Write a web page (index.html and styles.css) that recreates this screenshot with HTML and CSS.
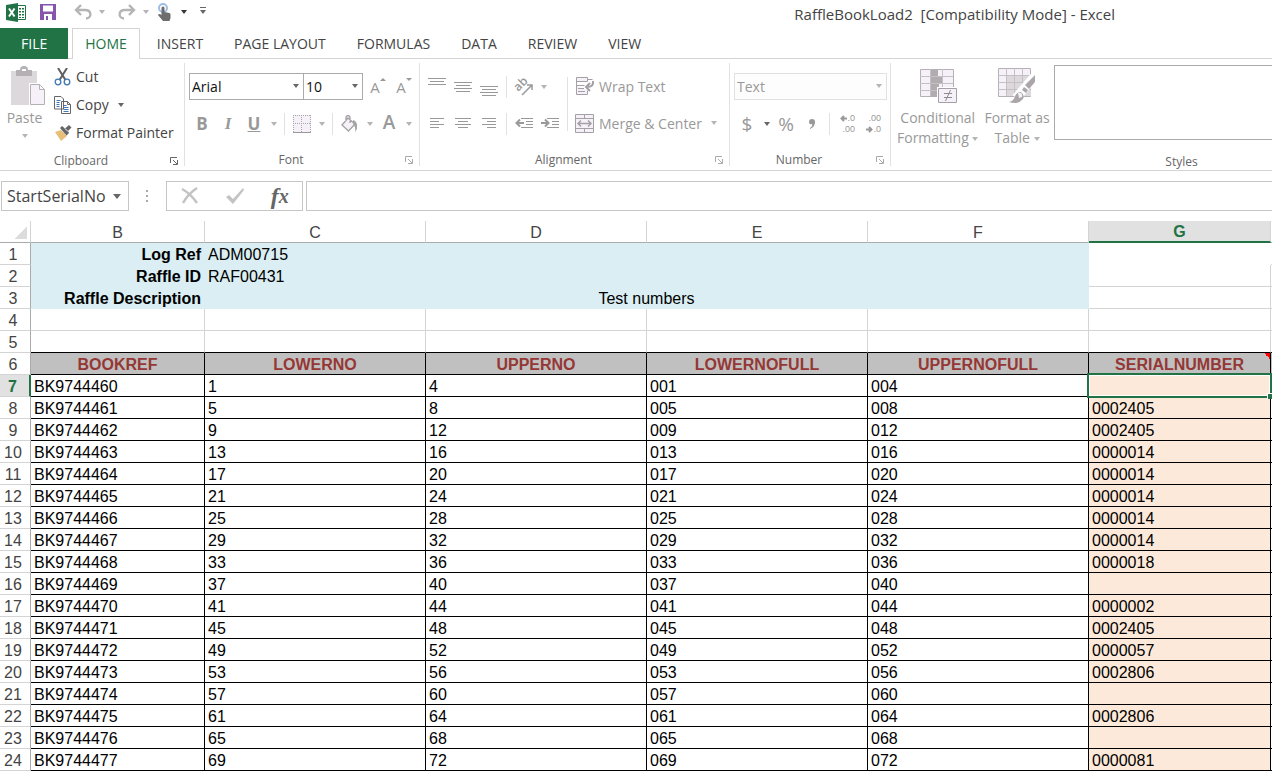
FILE: index.html
```html
<!DOCTYPE html>
<html lang="en">
<head>
    <meta charset="UTF-8">
    <meta name="viewport" content="width=device-width, initial-scale=1.0">
    <title>RaffleBookLoad2 [Compatibility Mode] - Excel</title>
    <link rel="stylesheet" href="styles.css">
</head>
<body>
    <header class="titlebar">
        <div class="quick">
            <svg class="logo" width="20" height="19" viewBox="0 0 20 19">
                <path fill="#fff" stroke="#217346" d="M10 2.500h9.500v14H10z"/>
                <path fill="#217346" d="M0 2l12-2v19L0 17zM13 5h2v1.500h-2zM16 5h2v1.500h-2zM13 8h2v1.500h-2zM16 8h2v1.500h-2zM13 11h2v1.500h-2zM16 11h2v1.500h-2zM13 14h2v1h-2zM16 14h2v1h-2z"/>
                <path stroke="#fff" stroke-width="2" d="M3 5.500l5.500 8M8.500 5.500l-5.500 8"/>
            </svg>
            <button class="quick-btn save" aria-label="Save">
                <svg width="16" height="16" viewBox="0 0 16 16"><path fill="#8656ad" fill-rule="evenodd" d="M0 0h16v16H0zM3 1.500v6h10v-6zM4 10v6h2v-4h2v4h4v-6z"/></svg>
            </button>
            <button class="quick-btn" aria-label="Undo">
                <svg width="18" height="16" viewBox="0 0 18 16" fill="none" stroke="#b5b5b5" stroke-width="2.400"><path d="M7 1L2 6l5 5M2 6h9c7 0 7 8 1 8.500"/></svg>
            </button>
            <button class="caret-btn wide" aria-label="Undo list"><span class="caret light"></span></button>
            <button class="quick-btn" aria-label="Redo">
                <svg width="18" height="16" viewBox="0 0 18 16" fill="none" stroke="#b5b5b5" stroke-width="2.400"><path d="M11 1l5 5-5 5M16 6H7C0 6 0 14 6 14.500"/></svg>
            </button>
            <button class="caret-btn" aria-label="Redo list"><span class="caret light"></span></button>
            <button class="quick-btn" aria-label="Touch mode">
                <svg width="16" height="18" viewBox="0 0 16 18"><circle cx="6" cy="5" r="4" fill="none" stroke="#9dbfe3" stroke-width="2"/><path fill="#6d6d6d" d="M4.500 4.500q1.500-2 3 0V9l5 1 1 1v4l-1 3H6l-5-6q1-2 3.500 0z"/></svg>
            </button>
            <button class="caret-btn" aria-label="Touch list"><span class="caret dark"></span></button>
            <button class="quick-btn" aria-label="Customize toolbar"><span class="caret lined"></span></button>
        </div>
        <div class="title">RaffleBookLoad2&nbsp; [Compatibility Mode] - Excel</div>
    </header>

    <nav class="tabs">
        <a class="tab file" href="#file">FILE</a>
        <a class="tab active" href="#home">HOME</a>
        <a class="tab" href="#insert">INSERT</a>
        <a class="tab" href="#layout">PAGE LAYOUT</a>
        <a class="tab" href="#formulas">FORMULAS</a>
        <a class="tab" href="#data">DATA</a>
        <a class="tab" href="#review">REVIEW</a>
        <a class="tab" href="#view">VIEW</a>
    </nav>

    <div class="ribbon">
        <section class="group clipboard">
            <div class="group-body">
                <button class="big paste">
                    <svg width="40" height="40" viewBox="-5 0 40 40">
                        <path fill="#dcd8dc" d="M1 5h26v34H1z"/>
                        <path fill="#b4b0b4" d="M6 4h4q0-4 4-4t4 4h4v6H6z"/><path fill="#fff" d="M12 3h4v2h-4z"/>
                        <path fill="#f6f1f8" stroke="#fff" stroke-width="3" d="M20.500 18.500h9l5 5v15h-14z"/>
                        <path fill="#f6f1f8" stroke="#b4b0b4" d="M20.500 18.500h9l5 5v15h-14zM29.500 18.500v5h5"/>
                    </svg>
                    <span>Paste</span>
                    <span class="caret light"></span>
                </button>
                <div class="stack">
                    <button class="cmd">
                        <svg width="18" height="18" viewBox="0 0 18 18" fill="none"><path stroke="#606060" stroke-width="2" d="M4 0l7.500 12M13 0L5.500 12"/><circle cx="4" cy="14" r="2.800" stroke="#3f78b5" stroke-width="1.300"/><circle cx="13" cy="14" r="2.800" stroke="#3f78b5" stroke-width="1.300"/></svg>
                        Cut
                    </button>
                    <button class="cmd">
                        <svg width="18" height="18" viewBox="0 0 18 18" fill="#fff" stroke="#666"><path d="M.5.500H7L9.500 3v10H.500zM7.500 5.500h6l3 3v9h-9zM13.500 5.500v3h3"/><path stroke="#3f78b5" d="M2.500 4.500h4M2.500 6.500h3M2.500 8.500h3M2.500 10.500h3M9.500 9.500h3M9.500 11.500h5M9.500 13.500h5M9.500 15.500h5"/></svg>
                        Copy <span class="caret"></span>
                    </button>
                    <button class="cmd">
                        <svg width="18" height="18" viewBox="0 0 18 18"><path fill="#e8bf79" d="M1 8l6-2 6 6-6 5z"/><path fill="#666" d="M6 4l2-2 3 2.500L15 1l2.500 2.500L14 7l1 2-2.500 2.500z"/><path stroke="#fff" d="M11 4.500l3 3"/></svg>
                        Format Painter
                    </button>
                </div>
            </div>
            <footer class="group-name">Clipboard<button class="launch dark" aria-label="Clipboard options"><svg width="8" height="8" viewBox="0 0 8 8" fill="none" stroke="currentColor"><path d="M.5 6V.500H7M3 3l4 4M7.500 3v4.500H3"/></svg></button></footer>
        </section>

        <section class="group font">
            <div class="group-body rows">
                <div class="row">
                    <span class="select family"><select aria-label="Font"><option>Arial</option></select></span>
                    <span class="select size"><select aria-label="Font size"><option>10</option></select></span>
                    <button class="tool grow" aria-label="Increase font size">A<svg width="6" height="4" viewBox="0 0 6 4"><path fill="currentColor" d="M0 3l3-3 3 3z"/></svg></button>
                    <button class="tool grow" aria-label="Decrease font size">A<svg width="6" height="4" viewBox="0 0 6 4"><path fill="currentColor" d="M0 0h6L3 3z"/></svg></button>
                </div>
                <div class="row">
                    <button class="tool bold">B</button>
                    <button class="tool italic">I</button>
                    <button class="tool underline">U</button>
                    <button class="caret-btn" aria-label="Underline style"><span class="caret light"></span></button>
                    <span class="sep"></span>
                    <button class="tool" aria-label="Borders"><svg width="18" height="18" viewBox="0 0 18 18"><path fill="#f6f1f8" d="M0 0h18v18H0z"/><path fill="none" stroke="#aaa5aa" stroke-dasharray="1 1" d="M0 .5h18M.5 0v17M17.500 0v17M8.500 0v17M0 8.500h18"/><path stroke="#999" d="M0 17.500h18"/></svg></button>
                    <button class="caret-btn" aria-label="Border list"><span class="caret light"></span></button>
                    <span class="sep"></span>
                    <button class="tool" aria-label="Fill color"><svg width="18" height="18" viewBox="0 0 18 18"><path fill="#f6f1f8" stroke="#a5a0a5" stroke-width="1.300" d="M7 3l7 6-6.500 7L1 10zM5 6V2q2-3 4 0v6"/><path fill="#a5a5a5" d="M12 5q5 1 4 9l-2 3q1-5-2-8z"/></svg></button>
                    <button class="caret-btn" aria-label="Fill list"><span class="caret light"></span></button>
                    <button class="tool color">A</button>
                    <button class="caret-btn" aria-label="Font color list"><span class="caret light"></span></button>
                </div>
            </div>
            <footer class="group-name">Font<button class="launch" aria-label="Font options"><svg width="8" height="8" viewBox="0 0 8 8" fill="none" stroke="currentColor"><path d="M.5 6V.500H7M3 3l4 4M7.500 3v4.500H3"/></svg></button></footer>
        </section>

        <section class="group alignment">
            <div class="group-body">
                <div class="rows">
                    <div class="row">
                        <button class="tool" aria-label="Top align"><svg width="18" height="18" viewBox="0 0 18 18" stroke="currentColor"><path d="M0 .5h18M2 3.500h14M0 6.500h18"/></svg></button>
                        <button class="tool" aria-label="Middle align"><svg width="18" height="18" viewBox="0 0 18 18" stroke="currentColor"><path d="M0 4.500h18M2 7.500h14M0 10.500h18M2 13.500h14"/></svg></button>
                        <button class="tool" aria-label="Bottom align"><svg width="18" height="18" viewBox="0 0 18 18" stroke="currentColor"><path d="M0 8.500h18M2 11.500h14M0 14.500h18M2 17.500h14"/></svg></button>
                        <span class="sep"></span>
                        <button class="tool" aria-label="Orientation"><svg width="20" height="18" viewBox="0 0 20 18"><text class="slant" x="1" y="12" transform="rotate(-45 5 9)">ab</text><path fill="none" stroke="currentColor" stroke-width="1.500" d="M8 17L18 7M13 7h5v5"/></svg></button>
                        <button class="caret-btn" aria-label="Orientation list"><span class="caret light"></span></button>
                    </div>
                    <div class="row">
                        <button class="tool" aria-label="Align left"><svg width="16" height="12" viewBox="0 0 16 12" stroke="currentColor"><path d="M1 .5h14M1 3.500h9M1 6.500h14M1 9.500h9"/></svg></button>
                        <button class="tool" aria-label="Center"><svg width="16" height="12" viewBox="0 0 16 12" stroke="currentColor"><path d="M0 .5h16M3 3.500h10M0 6.500h16M3 9.500h10"/></svg></button>
                        <button class="tool" aria-label="Align right"><svg width="16" height="12" viewBox="0 0 16 12" stroke="currentColor"><path d="M1 .5h14M6 3.500h9M1 6.500h14M6 9.500h9"/></svg></button>
                        <span class="sep"></span>
                        <button class="tool" aria-label="Decrease indent"><svg width="18" height="12" viewBox="0 0 18 12" fill="none" stroke="currentColor"><path d="M6 .5h12M11 3.500h7M11 6.500h7M6 9.500h12"/><path stroke-width="2" d="M9 5H1M5 1.500L1.500 5 5 8.500"/></svg></button>
                        <button class="tool" aria-label="Increase indent"><svg width="18" height="12" viewBox="0 0 18 12" fill="none" stroke="currentColor"><path d="M6 .5h12M11 3.500h7M11 6.500h7M6 9.500h12"/><path stroke-width="2" d="M0 5h8M4 1.500L7.500 5 4 8.500"/></svg></button>
                    </div>
                </div>
                <span class="sep tall"></span>
                <div class="rows">
                    <button class="cmd muted">
                        <svg width="20" height="18" viewBox="0 0 20 18" fill="#f6f1f8" stroke="#a5a0a5"><path d="M1.500.5h11v4h-11zM1.500 8.500v9h11v-4M1.500 8.500h8M3 11.500h6M3 14.500h7M1.500 4v5M12.500 2.500h5"/><path fill="none" stroke-width="2" d="M18 4q1 6-6 6M15 6l-4 4 4 4"/></svg>
                        Wrap Text
                    </button>
                    <button class="cmd muted">
                        <svg width="20" height="19" viewBox="0 0 20 19" fill="#f6f1f8" stroke="#a5a0a5"><path d="M.5.500h18v18H.500zM9.500.5v4M9.500 14.500v4M.5 4.500h18M.5 14.500h18"/><path fill="none" stroke-width="1.500" d="M3 9.500h13M6 6.500l-3 3 3 3M13 6.500l3 3-3 3"/></svg>
                        Merge &amp; Center <span class="caret light"></span>
                    </button>
                </div>
            </div>
            <footer class="group-name">Alignment<button class="launch" aria-label="Alignment options"><svg width="8" height="8" viewBox="0 0 8 8" fill="none" stroke="currentColor"><path d="M.5 6V.500H7M3 3l4 4M7.500 3v4.500H3"/></svg></button></footer>
        </section>

        <section class="group number">
            <div class="group-body rows">
                <span class="select format"><select aria-label="Number format"><option>Text</option></select></span>
                <div class="row">
                    <button class="tool money">$</button>
                    <button class="caret-btn" aria-label="Currency list"><span class="caret"></span></button>
                    <button class="tool money">%</button>
                    <button class="tool" aria-label="Comma style"><svg width="8" height="12" viewBox="0 0 8 12"><path fill="currentColor" d="M1 4q0-3 3-3t3 3q0 5-5 7v-1q3-2 2-4Q1 7 1 4z"/></svg></button>
                    <span class="sep"></span>
                    <button class="tool decimals"><span><svg width="7" height="7" viewBox="0 0 7 7" fill="none" stroke="currentColor" stroke-width="2"><path d="M7 3.500H2M4 1L1.500 3.500 4 6"/></svg>.0</span><span>.00</span></button>
                    <button class="tool decimals"><span>.00</span><span><svg width="7" height="7" viewBox="0 0 7 7" fill="none" stroke="currentColor" stroke-width="2"><path d="M0 3.500h5M3 1l2.500 2.500L3 6"/></svg>.0</span></button>
                </div>
            </div>
            <footer class="group-name">Number<button class="launch" aria-label="Number options"><svg width="8" height="8" viewBox="0 0 8 8" fill="none" stroke="currentColor"><path d="M.5 6V.500H7M3 3l4 4M7.500 3v4.500H3"/></svg></button></footer>
        </section>

        <section class="group styles">
            <div class="group-body">
                <button class="big">
                    <svg width="38" height="40" viewBox="-1 -2 38 40">
                        <path fill="#f6f1f8" stroke="#b4b0b4" d="M.5 1.500h33v27H.500z"/>
                        <path stroke="#c4c0c4" d="M0 8.500h33M0 15.500h33M0 22.500h33M10.500 1v27M22.500 1v27"/>
                        <path fill="#b0acb0" d="M11 2h7v6h-7zM11 9h11v6H11zM11 16h8v6h-8zM11 23h6v6h-6z"/>
                        <path fill="#f6f1f8" stroke="#fff" stroke-width="3" d="M18.500 20.500h18v14h-18z"/>
                        <path fill="#f6f1f8" stroke="#a5a0a5" d="M18.500 20.500h18v14h-18z"/>
                        <path stroke="#8f8b8f" d="M24 25.500h8M24 29.500h8M30.500 22l-5 11"/>
                    </svg>
                    <span>Conditional</span>
                    <span>Formatting <span class="caret light"></span></span>
                </button>
                <button class="big">
                    <svg width="38" height="40" viewBox="0 -2 38 40">
                        <path fill="#f6f1f8" stroke="#b4b0b4" d="M.5.500h32v28H.500z"/>
                        <path fill="#dcd8dc" d="M9 8h24v20H9z"/>
                        <path stroke="#c4c0c4" d="M0 7.500h33M0 14.500h33M0 21.500h33M8.500 0v28M16.500 0v28M24.500 0v28"/>
                        <path stroke="#fff" stroke-width="9" d="M36 9L18 30"/>
                        <path fill="#aaa6aa" d="M37 7v7l-6 7-4-4zM26 19l4 3-2 3-4-3z"/>
                        <path fill="#aaa6aa" d="M11 34q5-1 6-6 2-4 6-4 4 3 2 7-5 6-14 3z"/>
                        <path fill="#f6f1f8" d="M20 25q5-1 4 4l-3 1z"/>
                    </svg>
                    <span>Format as</span>
                    <span>Table <span class="caret light"></span></span>
                </button>
                <div class="gallery"></div>
            </div>
            <footer class="group-name">Styles</footer>
        </section>
    </div>

    <div class="formula-bar">
        <span class="select name-box"><select aria-label="Name box"><option>StartSerialNo</option></select></span>
        <span class="grip"></span>
        <div class="formula-tools">
            <button aria-label="Cancel"><svg width="18" height="18" viewBox="0 0 18 18" fill="none" stroke="#c3c3c3" stroke-width="2.500"><path d="M1 2q8 4 15 14M16 1Q7 7 2 16"/></svg></button>
            <button aria-label="Enter"><svg width="20" height="18" viewBox="0 0 20 18"><path fill="#c3c3c3" d="M1 10l3-2 4 4L18 1l1 2L8 17z"/></svg></button>
            <button class="fx" aria-label="Insert function">f<small>x</small></button>
        </div>
        <input class="formula" type="text" aria-label="Formula">
    </div>

    <table class="sheet">
        <colgroup>
            <col class="col-num"><col class="col-b"><col class="col-c"><col class="col-c"><col class="col-c"><col class="col-c"><col class="col-g"><col>
        </colgroup>
        <thead>
            <tr><th class="corner"></th><th>B</th><th>C</th><th>D</th><th>E</th><th>F</th><th class="selected">G</th><th></th></tr>
        </thead>
        <tbody class="info">
            <tr class="first"><th>1</th><td class="label">Log Ref</td><td class="blue" colspan="4">ADM00715</td><td></td><td></td></tr>
            <tr><th>2</th><td class="label">Raffle ID</td><td class="blue" colspan="4">RAF00431</td><td></td><td></td></tr>
            <tr><th>3</th><td class="label">Raffle Description</td><td class="blue middle" colspan="4">Test numbers</td><td></td><td></td></tr>
            <tr><th>4</th><td></td><td></td><td></td><td></td><td></td><td></td><td></td></tr>
            <tr class="last"><th>5</th><td></td><td></td><td></td><td></td><td></td><td></td><td></td></tr>
        </tbody>
        <tbody class="data">
            <tr class="fields"><th>6</th><td>BOOKREF</td><td>LOWERNO</td><td>UPPERNO</td><td>LOWERNOFULL</td><td>UPPERNOFULL</td><td class="noted">SERIALNUMBER</td><td></td></tr>
            <tr><th class="selected">7</th><td>BK9744460</td><td>1</td><td>4</td><td>001</td><td>004</td><td class="current"></td><td></td></tr>
            <tr><th>8</th><td>BK9744461</td><td>5</td><td>8</td><td>005</td><td>008</td><td>0002405</td><td></td></tr>
            <tr><th>9</th><td>BK9744462</td><td>9</td><td>12</td><td>009</td><td>012</td><td>0002405</td><td></td></tr>
            <tr><th>10</th><td>BK9744463</td><td>13</td><td>16</td><td>013</td><td>016</td><td>0000014</td><td></td></tr>
            <tr><th>11</th><td>BK9744464</td><td>17</td><td>20</td><td>017</td><td>020</td><td>0000014</td><td></td></tr>
            <tr><th>12</th><td>BK9744465</td><td>21</td><td>24</td><td>021</td><td>024</td><td>0000014</td><td></td></tr>
            <tr><th>13</th><td>BK9744466</td><td>25</td><td>28</td><td>025</td><td>028</td><td>0000014</td><td></td></tr>
            <tr><th>14</th><td>BK9744467</td><td>29</td><td>32</td><td>029</td><td>032</td><td>0000014</td><td></td></tr>
            <tr><th>15</th><td>BK9744468</td><td>33</td><td>36</td><td>033</td><td>036</td><td>0000018</td><td></td></tr>
            <tr><th>16</th><td>BK9744469</td><td>37</td><td>40</td><td>037</td><td>040</td><td></td><td></td></tr>
            <tr><th>17</th><td>BK9744470</td><td>41</td><td>44</td><td>041</td><td>044</td><td>0000002</td><td></td></tr>
            <tr><th>18</th><td>BK9744471</td><td>45</td><td>48</td><td>045</td><td>048</td><td>0002405</td><td></td></tr>
            <tr><th>19</th><td>BK9744472</td><td>49</td><td>52</td><td>049</td><td>052</td><td>0000057</td><td></td></tr>
            <tr><th>20</th><td>BK9744473</td><td>53</td><td>56</td><td>053</td><td>056</td><td>0002806</td><td></td></tr>
            <tr><th>21</th><td>BK9744474</td><td>57</td><td>60</td><td>057</td><td>060</td><td></td><td></td></tr>
            <tr><th>22</th><td>BK9744475</td><td>61</td><td>64</td><td>061</td><td>064</td><td>0002806</td><td></td></tr>
            <tr><th>23</th><td>BK9744476</td><td>65</td><td>68</td><td>065</td><td>068</td><td></td><td></td></tr>
            <tr><th>24</th><td>BK9744477</td><td>69</td><td>72</td><td>069</td><td>072</td><td>0000081</td><td></td></tr>
        </tbody>
    </table>
</body>
</html>
```

FILE: styles.css
```css
* {
    box-sizing: border-box;
}

body {
    margin: 0;
    background: #fff;
    color: #444;
    font-family: "Open Sans", "Noto Sans", sans-serif;
    font-size: 14px;
    overflow-x: hidden;
}

button {
    display: flex;
    align-items: center;
    justify-content: center;
    padding: 0;
    border: none;
    background: none;
    color: inherit;
    font: inherit;
    white-space: nowrap;
}

svg {
    display: block;
    flex: none;
}

.caret {
    display: inline-block;
    border: 3px solid transparent;
    border-top: 4px solid #666;
    border-bottom: none;
    vertical-align: middle;
}

.caret.light {
    border-top-color: #b5b5b5;
}

.caret.dark {
    border-top-color: #333;
}

.caret.lined {
    position: relative;
}

.caret.lined::before {
    content: "";
    position: absolute;
    left: -3px;
    top: -7px;
    width: 6px;
    height: 1px;
    background: #666;
}

.caret-btn {
    width: 13px;
    height: 26px;
}

/* title bar */
.titlebar {
    display: flex;
    align-items: center;
    height: 28px;
}

.quick {
    display: flex;
    align-items: center;
    flex: 1;
    height: 28px;
    padding: 0 0 4px 6px;
}

.quick-btn {
    width: 26px;
}

.quick-btn.save {
    width: 44px;
}

.quick .caret-btn {
    width: 12px;
}

.quick .wide {
    margin-right: 6px;
}

.title {
    margin-right: 157px;
    font-size: 15px;
}

/* tabs */
.tabs {
    display: flex;
    gap: 3px;
    height: 31px;
    border-bottom: 1px solid #d4d4d4;
}

.tab {
    height: 30px;
    padding: 0 14px;
    color: #444;
    line-height: 31px;
    text-decoration: none;
}

.tab.file {
    height: 31px;
    margin-right: 1px;
    padding: 0 21px;
    background: #217346;
    color: #fff;
}

.tab.active {
    height: 31px;
    padding: 0 12px;
    border: 1px solid #d4d4d4;
    border-bottom: none;
    background: #fff;
    color: #217346;
    line-height: 30px;
}

/* ribbon */
.ribbon {
    display: flex;
    height: 112px;
    overflow: hidden;
    border-bottom: 1px solid #d4d4d4;
}

.group {
    display: flex;
    flex-direction: column;
    flex: none;
    margin: 4px 0;
    border-right: 1px solid #e1e1e1;
}

.group-body {
    display: flex;
    flex: 1;
}

.group-name {
    position: relative;
    height: 20px;
    padding-right: 22px;
    color: #666;
    font-size: 12px;
    line-height: 28px;
    text-align: center;
}

.launch {
    position: absolute;
    right: 6px;
    top: 10px;
    color: #aaa;
}

.launch.dark {
    color: #666;
}

.rows {
    display: flex;
    flex-direction: column;
    align-items: flex-start;
    gap: 10px;
    padding-top: 10px;
}

.row {
    display: flex;
    align-items: center;
    height: 27px;
}

.big {
    flex-direction: column;
    justify-content: flex-start;
    padding-top: 3px;
    color: #999;
    line-height: 20px;
}

.big svg {
    margin-bottom: 2px;
}

.stack {
    padding-left: 5px;
}

.cmd {
    height: 28px;
    gap: 4px;
    padding-bottom: 1px;
}

.cmd .caret {
    margin-left: 5px;
}

.muted {
    height: 27px;
    color: #999;
}

.tool {
    width: 26px;
    height: 26px;
    color: #999;
    font-size: 17px;
}

.sep {
    width: 1px;
    height: 22px;
    margin: 0 4px;
    background: #e1e1e1;
}

.sep.tall {
    height: 54px;
    margin: 14px 7px 0 4px;
}

.clipboard {
    width: 185px;
}

.paste {
    width: 49px;
}

.paste .caret {
    margin-top: 6px;
}

.font {
    width: 235px;
}

.font .group-body,
.alignment .group-body,
.number .group-body {
    padding-left: 4px;
}

.grow {
    font-size: 15px;
}

.grow svg {
    margin-bottom: 14px;
}

.bold,
.underline {
    font-weight: 700;
}

.italic {
    font-family: "Liberation Serif", serif;
    font-style: italic;
    font-weight: 700;
}

.underline {
    text-decoration: underline;
}

.color,
.money {
    font-size: 19px;
}

.color {
    padding-bottom: 4px;
    font-weight: 600;
}

.slant {
    fill: currentColor;
    font-size: 12px;
    font-weight: 600;
}

.alignment {
    width: 310px;
}

.alignment svg {
    overflow: visible;
}

.number {
    width: 161px;
}

.decimals {
    flex-direction: column;
    align-items: flex-end;
    padding-right: 5px;
    font-family: "Liberation Sans", Arial, sans-serif;
    font-size: 9px;
    line-height: 11px;
}

.decimals span {
    display: flex;
    align-items: center;
}

.styles {
    width: 582px;
}

.styles .group-name {
    padding: 0;
}

.styles .group-body {
    gap: 6px;
    padding-left: 6px;
}

.gallery {
    flex: 1;
    height: 75px;
    margin: 2px 0 0 -2px;
    border: 1px solid #ababab;
}

/* drop-downs */
.select {
    display: block;
    position: relative;
    height: 27px;
}

.select select {
    width: 100%;
    height: 100%;
    padding: 0 2px;
    border: 1px solid #ababab;
    border-radius: 0;
    background: #fff;
    appearance: none;
    color: #111;
    font: inherit;
}

.select::after {
    content: "";
    position: absolute;
    right: 5px;
    top: 11px;
    border: 3px solid transparent;
    border-top: 4px solid #666;
    border-bottom: none;
    pointer-events: none;
}

.family {
    width: 115px;
}

.size {
    width: 60px;
    margin-left: -1px;
    margin-right: 2px;
}

.format {
    width: 153px;
}

.format select {
    border-color: #e1e1e1;
    background: #fdfdfd;
    color: #999;
}

.format::after {
    border-top-color: #b5b5b5;
}

/* formula bar */
.formula-bar {
    display: flex;
    align-items: center;
    margin: 10px 0;
    padding-left: 1px;
}

.name-box {
    width: 128px;
    height: 30px;
    font-size: 16px;
}

.name-box select {
    padding: 0 5px;
    border-color: #c6c6c6;
    color: #444;
}

.name-box::after {
    right: 8px;
    top: 13px;
    border-width: 5px 4px 0;
}

.grip {
    width: 2px;
    height: 12px;
    margin: 0 18px 0 17px;
    background: repeating-linear-gradient(#aaa 0 2px, #fff 2px 5px);
}

.formula-tools {
    display: flex;
    width: 137px;
    height: 30px;
    padding-left: 1px;
    border: 1px solid #c6c6c6;
}

.formula-tools button {
    flex: 1;
}

.fx {
    color: #666;
    font-family: "Liberation Serif", serif;
    font-size: 24px;
    font-style: italic;
    font-weight: 700;
}

.fx small {
    font-size: 20px;
}

.formula {
    flex: 1;
    height: 30px;
    margin-left: 3px;
    border: 1px solid #c6c6c6;
    border-right: none;
}

/* worksheet */
.sheet {
    width: 100%;
    table-layout: fixed;
    border-collapse: separate;
    border-spacing: 0;
    color: #000;
    font-family: "Liberation Sans", Arial, sans-serif;
    font-size: 16px;
    line-height: 19px;
}

.col-num {
    width: 31px;
}

.col-b {
    width: 174px;
}

.col-c {
    width: 221px;
}

.col-g {
    width: 182px;
}

.sheet td,
.sheet th {
    height: 22px;
    padding: 2px 3px 0;
    overflow: hidden;
    border-right: 1px solid #d4d4d4;
    border-bottom: 1px solid #d4d4d4;
    white-space: nowrap;
}

.sheet td:last-child,
.sheet th:last-child {
    padding: 0;
    border-right: none;
}

.sheet th {
    color: #444;
    font-weight: 400;
}

.sheet thead th {
    border-bottom-color: #ababab;
}

.sheet tbody th {
    padding: 2px 4px 0 0;
    border-right-color: #ababab;
}

.sheet .corner {
    background: linear-gradient(135deg, transparent 50%, #dcdcdc 50%) 14px 5px / 13px 13px no-repeat;
}

.sheet .selected {
    background: #e1e1e1;
    color: #217346;
    font-weight: 700;
}

.sheet thead .selected {
    border-bottom: 2px solid #217346;
    line-height: 18px;
}

.sheet tbody .selected {
    border-right: 2px solid #217346;
}

.sheet .label,
.sheet .blue {
    border-color: #daeef3;
    background: #daeef3;
}

.label {
    font-weight: 700;
    text-align: right;
}

.middle {
    text-align: center;
}

.sheet .first td:nth-child(4) {
    border-color: #fff;
}

.sheet .last td,
.sheet .data td {
    border-bottom-color: #000;
}

.sheet .data td {
    border-right-color: #000;
}

.data td:nth-child(7) {
    background: #fde9d9;
}

.sheet .fields td {
    background: #c0c0c0;
    color: #953735;
    font-weight: 700;
    text-align: center;
}

.sheet .fields .noted {
    background: linear-gradient(45deg, transparent 50%, #f00 50%) right top / 6px 6px no-repeat #c0c0c0;
}

.sheet .current {
    position: relative;
    overflow: visible;
    box-shadow: inset 0 0 0 1px #fff;
}

.current::before {
    content: "";
    position: absolute;
    inset: -2px;
    border: 2px solid #217346;
}

.current::after {
    content: "";
    position: absolute;
    right: -3px;
    bottom: -3px;
    width: 5px;
    height: 5px;
    border: 1px solid #fff;
    border-width: 1px 0 0 1px;
    background: #217346;
}
```
